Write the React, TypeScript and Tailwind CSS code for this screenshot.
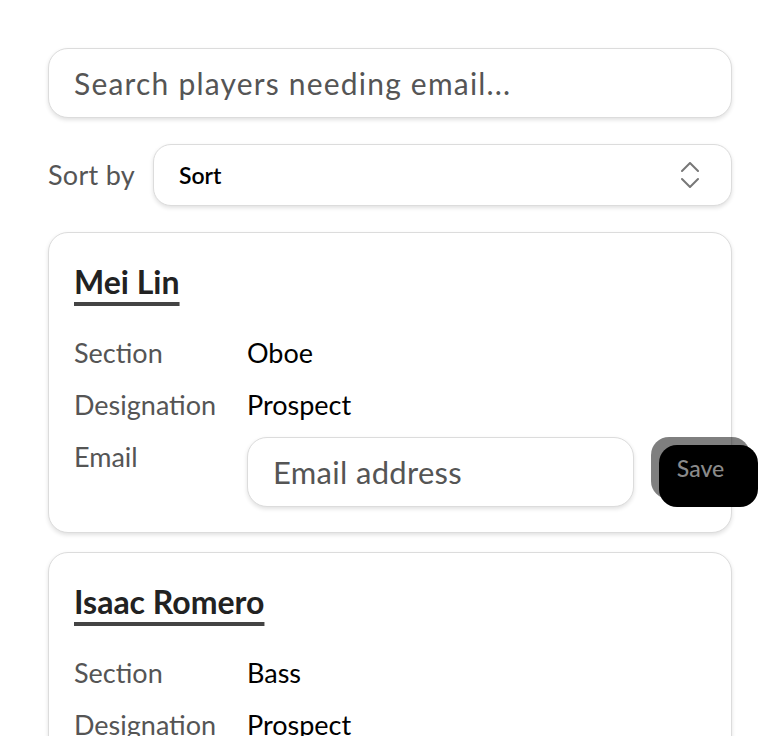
import React from 'react';

type Player = {
  name: string;
  section: string;
  designation: string;
};

const players: Player[] = [
  { name: 'Mei Lin', section: 'Oboe', designation: 'Prospect' },
  { name: 'Isaac Romero', section: 'Bass', designation: 'Prospect' },
];

const UpDown = () => (
  <svg width="18" height="26" viewBox="0 0 18 26" fill="none" stroke="#777" strokeWidth="2" strokeLinecap="round" strokeLinejoin="round">
    <path d="M1 9 9 1l8 8" />
    <path d="M1 17l8 8 8-8" />
  </svg>
);

const Row: React.FC<{ label: string; children: React.ReactNode }> = ({ label, children }) => (
  <div className="flex items-start">
    <span className="w-[173px] shrink-0 text-[27px] leading-[52px] text-[#555]">{label}</span>
    {children}
  </div>
);

const PlayerCard: React.FC<{ player: Player }> = ({ player }) => (
  <div className="rounded-[20px] border border-[#dcdcdc] bg-white px-[25px] pt-[26px] pb-[25px] shadow-[0_2px_4px_rgba(0,0,0,0.12)]">
    <h2 className="text-[32px] font-bold leading-[46px] text-[#222] underline decoration-[#444] decoration-[4px] underline-offset-[8px]">
      {player.name}
    </h2>
    <div className="mt-[22px] flex flex-col">
      <Row label="Section">
        <span className="text-[27px] leading-[52px] text-black">{player.section}</span>
      </Row>
      <Row label="Designation">
        <span className="text-[27px] leading-[52px] text-black">{player.designation}</span>
      </Row>
      <Row label="Email">
        <div className="mt-[6px] flex items-start">
          <input
            placeholder="Email address"
            className="h-[70px] w-[387px] rounded-[20px] border border-[#dcdcdc] bg-white px-[25px] text-[31px] tracking-[0.01em] text-black placeholder-[#555] shadow-[0_2px_4px_rgba(0,0,0,0.12)] outline-none"
          />
          {/* black block sits 8px down-right, half-black button over it */}
          <div className="relative ml-[17px] h-[62px] w-[99px] shrink-0">
            <div className="absolute left-[8px] top-[8px] h-[62px] w-[99px] rounded-[18px] bg-black" />
            <button className="relative h-[62px] w-[99px] rounded-[18px] bg-black/50 text-[23px] font-medium text-[#8a8a8a]">
              Save
            </button>
          </div>
        </div>
      </Row>
    </div>
  </div>
);

export default function App() {
  return (
    <div className="min-h-screen bg-white font-['Lato',sans-serif]">
      <div className="flex flex-col gap-[26px] px-12 pt-12">
        <input
          placeholder="Search players needing email..."
          className="h-[70px] w-full rounded-[20px] border border-[#dcdcdc] bg-white px-[25px] text-[30px] tracking-[0.04em] text-black placeholder-[#555] shadow-[0_2px_4px_rgba(0,0,0,0.12)] outline-none"
        />
        <div className="flex items-center gap-[18px]">
          <span className="text-[27px] tracking-[0.01em] text-[#555]">Sort by</span>
          <div className="flex h-[62px] flex-1 items-center justify-between rounded-[18px] border border-[#dcdcdc] bg-white pl-[25px] pr-[32px] shadow-[0_2px_4px_rgba(0,0,0,0.12)]">
            <span className="text-[23px] font-semibold text-black">Sort</span>
            <UpDown />
          </div>
        </div>
        <div className="flex flex-col gap-[19px]">
          {players.map((p) => (
            <PlayerCard key={p.name} player={p} />
          ))}
        </div>
      </div>
    </div>
  );
}
